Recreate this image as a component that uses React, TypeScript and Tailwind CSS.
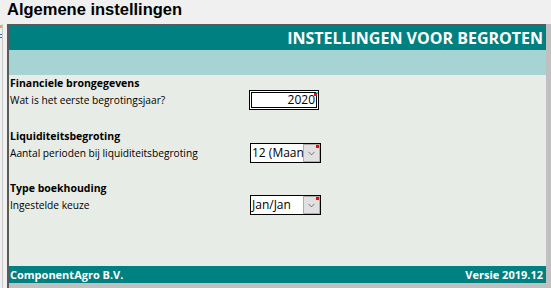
import { ChevronDown } from "lucide-react";

function Marker() {
  return <span className="absolute top-[1px] right-[1px] w-[3px] h-[3px] bg-[#ff0000]" />;
}

function NumberInput({ value }: { value: string }) {
  return (
    <div className="relative w-[70px] h-[20px] border border-black bg-white p-[1px]">
      <div className="h-full border border-black flex items-center justify-end pr-[1px] text-[12px] leading-none text-black">
        {value}
      </div>
      <span className="absolute top-[1px] right-0 w-[2px] h-[2px] bg-[#00e0ff]" />
      <span className="absolute top-[2px] right-[1px] w-[3px] h-[3px] bg-[#ff0000]" />
    </div>
  );
}

function Dropdown({ value }: { value: string }) {
  return (
    <div className="relative w-[71px] h-[20px] border border-black bg-white flex">
      <div className="w-[52px] overflow-hidden whitespace-nowrap pl-[1px] text-[12px] leading-[18px] text-black">
        {value}
      </div>
      <div className="flex-1 h-full bg-[#e1e1e1] border border-[#adadad] flex items-center justify-center">
        <ChevronDown className="w-[11px] h-[11px] text-[#404040]" strokeWidth={1.5} />
      </div>
      <Marker />
    </div>
  );
}

function Section({
  title,
  label,
  mt,
  children,
}: {
  title: string;
  label: string;
  mt: string;
  children: React.ReactNode;
}) {
  return (
    <div className={mt}>
      <div className="pl-[1px] font-bold text-[10.5px] leading-[14px] text-black">{title}</div>
      <div className="flex items-center h-[20px]">
        <div className="w-[240px] pl-[1px] text-[10.2px] leading-[15px] text-black">{label}</div>
        {children}
      </div>
    </div>
  );
}

export default function App() {
  return (
    <div
      className="w-[551px] h-[288px] bg-[#f0f0f0] overflow-hidden flex flex-col"
      style={{ fontFamily: "'Open Sans', 'Noto Sans', sans-serif" }}
    >
      <div
        className="h-[24px] pl-[7px] font-bold text-[16.5px] leading-[18px] text-black"
        style={{ fontFamily: "'Liberation Sans', Arial, sans-serif" }}
      >
        Algemene instellingen
      </div>
      <div className="flex-1 flex">
        <div className="w-[7px] relative">
          <span className="absolute left-[2px] top-0 bottom-0 w-px bg-[#c8c8c8]" />
          <span className="absolute left-0 top-[1px] w-[2px] h-[3px] bg-[#d8b040]" />
          <span className="absolute left-0 top-[10px] w-[2px] h-[1px] bg-[#3070a0]" />
          <span className="absolute left-0 top-[13px] w-[2px] h-[1px] bg-[#3070a0]" />
        </div>
        <div className="flex-1 flex flex-col border-l-2 border-t-2 border-[#5a5a5a]">
          <div className="h-[24px] bg-[#008080] text-white font-bold text-[16px] leading-[24px] text-right pr-[3px] whitespace-nowrap">
            INSTELLINGEN VOOR BEGROTEN
          </div>
          <div className="h-[25px] bg-[#a6d3d3]" />
          <div className="flex-1 bg-[#e8ece6]">
            <Section title="Financiele brongegevens" label="Wat is het eerste begrotingsjaar?" mt="mt-[1px]">
              <NumberInput value="2020" />
            </Section>
            <Section
              title="Liquiditeitsbegroting"
              label="Aantal perioden bij liquiditeitsbegroting"
              mt="mt-[19px]"
            >
              <div className="ml-[1px]">
                <Dropdown value="12 (Maand" />
              </div>
            </Section>
            <Section title="Type boekhouding" label="Ingestelde keuze" mt="mt-[18px]">
              <div className="ml-[1px]">
                <Dropdown value="Jan/Jan" />
              </div>
            </Section>
          </div>
          <div className="h-[17px] bg-[#008080] flex items-center justify-between pl-[1px] pr-[3px] text-white font-bold text-[11px] leading-[17px]">
            <span>ComponentAgro B.V.</span>
            <span>Versie 2019.12</span>
          </div>
          <div className="h-[5px] bg-[#c0c0c0]" />
        </div>
        <div className="w-[5px] bg-[#c0c0c0]" />
      </div>
    </div>
  );
}
